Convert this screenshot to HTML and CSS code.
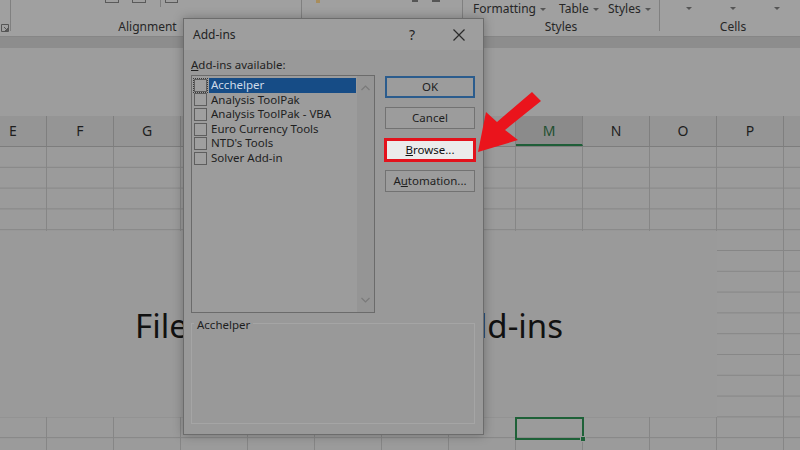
FILE: index.html
```html
<!DOCTYPE html>
<html>
<head>
<meta charset="utf-8">
<link rel="stylesheet" href="styles.css">
</head>
<body>
<div class="app">
  <div class="ribbon">
    <div class="grp g1">
      <div class="gtop"></div>
      <div class="glabel"><svg class="launch" width="8" height="8" viewBox="0 0 8 8"><path d="M0.5 7.5V0.5h7v7z" fill="none" stroke="#555" stroke-width="1"/><path d="M3 3l3.5 3.5M6.5 4v2.5H4" fill="none" stroke="#555" stroke-width="1"/></svg></div>
    </div>
    <div class="grp g2">
      <div class="gtop">
        <span class="ico ico-a"></span><span class="ico ico-b"></span><span class="vsep"></span><span class="ico ico-c"></span>
      </div>
      <div class="glabel">Alignment</div>
    </div>
    <div class="grp g3">
      <div class="gtop"><span class="ico-or"></span><span class="mark m1"></span><span class="mark m2"></span></div>
      <div class="glabel">Number</div>
    </div>
    <div class="grp g4">
      <div class="gtop">
        <span class="ti ti1">Formatting<i class="caret"></i></span>
        <span class="ti ti2">Table<i class="caret"></i></span>
        <span class="ti ti3">Styles<i class="caret"></i></span>
      </div>
      <div class="glabel">Styles</div>
    </div>
    <div class="grp g5">
      <div class="gtop"><i class="caret c1"></i><i class="caret c2"></i><i class="caret c3"></i></div>
      <div class="glabel">Cells</div>
    </div>
  </div>
  <div class="band"></div>
  <div class="fbar"></div>
  <div class="colhead">
    <div class="ch">E</div><div class="ch">F</div><div class="ch">G</div><div class="ch">H</div><div class="ch">I</div><div class="ch">J</div><div class="ch">K</div><div class="ch">L</div><div class="ch sel">M</div><div class="ch">N</div><div class="ch">O</div><div class="ch">P</div><div class="ch"></div>
  </div>
  <div class="grid"></div>

  <div class="shape">
    <div class="bigtext"><span>File</span><span>&gt; Options &gt;</span><span>Add-ins</span></div>
  </div>
  <div class="selcell"><span class="handle"></span></div>

  <div class="dlg">
    <div class="dlg-title">
      <span class="dlg-name">Add-ins</span>
      <span class="help">?</span>
      <span class="close"><svg width="12" height="12" viewBox="0 0 12 12"><path d="M0.5 0.5L11.5 11.5M11.5 0.5L0.5 11.5" stroke="#2a2a2a" stroke-width="1.2"/></svg></span>
    </div>
    <div class="dlg-body">
      <div class="leftcol">
        <div class="lab"><u>A</u>dd-ins available:</div>
        <div class="listbox">
          <div class="items">
            <div class="item"><span class="cb focus"></span><span class="lbl selected">Acchelper</span></div>
            <div class="item"><span class="cb"></span><span class="lbl">Analysis ToolPak</span></div>
            <div class="item"><span class="cb"></span><span class="lbl">Analysis ToolPak - VBA</span></div>
            <div class="item"><span class="cb"></span><span class="lbl">Euro Currency Tools</span></div>
            <div class="item"><span class="cb"></span><span class="lbl">NTD's Tools</span></div>
            <div class="item"><span class="cb"></span><span class="lbl">Solver Add-in</span></div>
          </div>
          <div class="scroll">
            <svg width="9" height="6" viewBox="0 0 9 6"><path d="M0.5 5L4.5 1L8.5 5" fill="none" stroke="#7a7a7a" stroke-width="1.2"/></svg>
            <svg width="9" height="6" viewBox="0 0 9 6"><path d="M0.5 1L4.5 5L8.5 1" fill="none" stroke="#7a7a7a" stroke-width="1.2"/></svg>
          </div>
        </div>
      </div>
      <div class="btncol">
        <div class="btn def">OK</div>
        <div class="btn">Cancel</div>
        <div class="btn browse"><span><u>B</u>rowse...</span></div>
        <div class="btn">A<u>u</u>tomation...</div>
      </div>
      <div class="desc">
        <span class="legend">Acchelper</span>
      </div>
    </div>
  </div>

  <svg class="arrow" width="80" height="72" viewBox="470 86 80 72">
    <polygon points="532,92 541,101 505,130 518,140 478,152 486,112 497,122" fill="#ea141c"/>
  </svg>
</div>
</body>
</html>
```
FILE: styles.css
```css
* { box-sizing: border-box; }
html, body { margin: 0; padding: 0; }
body {
  width: 800px;
  height: 450px;
  overflow: hidden;
  font-family: "Noto Sans", "Open Sans", sans-serif;
  color: #222;
  background: #9b9b9b;
}
.app {
  position: relative;
  width: 800px;
  height: 450px;
  display: flex;
  flex-direction: column;
  overflow: hidden;
}

/* ribbon */
.ribbon {
  height: 36px;
  background: #a0a0a0;
  display: flex;
  flex: none;
}
.grp {
  height: 31px;
  border-right: 1px solid #808080;
  display: flex;
  flex-direction: column;
  font-size: 12px;
}
.gtop {
  height: 20px;
  flex: none;
  display: flex;
  align-items: flex-start;
  line-height: 14px;
  color: #262626;
}
.glabel {
  height: 11px;
  flex: none;
  line-height: 14px;
  text-align: center;
  color: #262626;
  white-space: nowrap;
}
.g1 { width: 11px; }
.g1 .glabel { text-align: left; padding-top: 4px; padding-left: 1px; line-height: 8px; }
.launch { display: block; }
.g2 { width: 291px; padding-right: 17px; }
.g3 { width: 161px; }
.g4 { width: 197px; }
.g4 .gtop { padding-top: 1px; }
.g5 { flex: 1; border-right: none; padding-left: 6px; }

.ico { display: inline-block; width: 14px; height: 3px; border: 1px solid #5a5a5a; border-top: none; }
.ico-a { margin-left: 94px; }
.ico-b { margin-left: 13px; }
.vsep { display: inline-block; width: 1px; height: 7px; background: #7e7e7e; margin-left: 14px; }
.ico-c { margin-left: 4px; width: 13px; }
.ico-or { display: inline-block; width: 4px; height: 3px; background: #a88d5c; margin-left: 14px; }
.mark { display: inline-block; height: 2px; background: #555; }
.m1 { width: 6px; margin-left: 92px; }
.m2 { width: 8px; margin-left: 14px; }

.ti { display: inline-flex; align-items: center; white-space: nowrap; line-height: 15px; }
.ti1 { margin-left: 10px; width: 86px; }
.ti2 { width: 49px; }
.caret {
  display: inline-block;
  width: 0; height: 0;
  border-left: 3px solid transparent;
  border-right: 3px solid transparent;
  border-top: 3px solid #555;
  margin-left: 4px;
  margin-top: 1px;
}
.g5 .gtop { padding-top: 7px; }
.g5 .caret { margin: 0; }
.c1 { margin-left: 20px !important; }
.c2 { margin-left: 38px !important; }
.c3 { margin-left: 38px !important; }

.band { height: 12px; background: #8d8d8d; flex: none; border-top: 1px solid #868686; }
.fbar { height: 68px; background: #9d9d9d; flex: none; }

/* column headers */
.colhead {
  height: 31px;
  flex: none;
  display: flex;
  margin-left: -20px;
  background: #959595;
  border-bottom: 1px solid #7d7d7d;
}
.ch {
  width: 67px;
  flex: none;
  border-right: 1px solid #7f7f7f;
  text-align: center;
  font-size: 14px;
  line-height: 30px;
  color: #1e1e1e;
}
.ch.sel {
  background: #8b8b8b;
  color: #1f4f30;
  border-bottom: 2px solid #1f5e38;
}

.grid {
  flex: 1;
  background-color: #9b9b9b;
  background-image:
    linear-gradient(to right, #868686 0 1px, transparent 1px),
    linear-gradient(to bottom, transparent 0 19.8px, #868686 19.8px 20.8px);
  background-size: 67px 100%, 100% 20.8px;
  background-position: 46px 0, 0 0;
}

/* text box shape over the sheet */
.shape {
  position: absolute;
  left: 0;
  top: 231px;
  width: 717px;
  height: 186px;
  background: #9a9a9a;
  padding-top: 75px;
  padding-left: 135px;
}
.bigtext {
  width: 428px;
  display: flex;
  justify-content: space-between;
  font-size: 33px;
  line-height: 40px;
  color: #111;
  white-space: nowrap;
}

.selcell {
  position: absolute;
  left: 515px;
  top: 417px;
  width: 69px;
  height: 23px;
  border: 2px solid #1e6138;
}
.handle {
  position: absolute;
  right: -4px;
  bottom: -4px;
  width: 6px;
  height: 6px;
  background: #1e6138;
  border: 1px solid #9b9b9b;
}

/* dialog */
.dlg {
  position: absolute;
  left: 183px;
  top: 18px;
  width: 301px;
  height: 417px;
  border: 1px solid #6c6c6c;
  background: #999999;
  box-shadow: 0 0 10px rgba(0,0,0,0.28);
  display: flex;
  flex-direction: column;
}
.dlg-title {
  height: 31px;
  flex: none;
  display: flex;
  align-items: center;
  padding-left: 9px;
  background: #9e9e9e;
  font-size: 12px;
  color: #242424;
}
.help {
  margin-left: auto;
  width: 46px;
  text-align: center;
  font-size: 14px;
}
.close {
  width: 48px;
  display: flex;
  justify-content: center;
}
.close svg { display: block; }

.dlg-body {
  display: grid;
  grid-template-columns: 184px 90px;
  column-gap: 10px;
  padding: 7px 8px 0 7px;
  font-size: 11.5px;
}
.lab { line-height: 16px; height: 18px; color: #1f1f1f; }
.listbox {
  height: 238px;
  border: 1px solid #6b6b6b;
  background: #9c9c9c;
  display: flex;
}
.items { flex: 1; padding: 2px 1px 0 2px; }
.item { display: flex; align-items: center; height: 14.6px; }
.cb {
  width: 13px;
  height: 13px;
  flex: none;
  border: 1px solid #5e5e5e;
  background: #9f9f9f;
  margin-right: 2px;
}
.cb.focus { outline: 1px dotted #3a3a3a; outline-offset: 0; }
.lbl {
  flex: 1;
  line-height: 14.5px;
  padding-left: 2px;
  white-space: nowrap;
  color: #1e1e1e;
}
.lbl.selected { background: #164c86; color: #cfdbe9; }
.scroll {
  width: 17px;
  flex: none;
  background: #959595;
  display: flex;
  flex-direction: column;
  align-items: center;
  justify-content: space-between;
  padding: 9px 0 9px;
}
.scroll svg { display: block; }

.btncol {
  padding-top: 19px;
  display: flex;
  flex-direction: column;
  gap: 9.3px;
}
.btn {
  height: 22px;
  border: 1px solid #727272;
  background: #9c9c9c;
  text-align: center;
  line-height: 20px;
  color: #1e1e1e;
}
.btn.def { border: 2px solid #2b5c8d; line-height: 18px; }
.btn.browse {
  background: #ebebeb;
  color: #111;
  outline: 3px solid #e3121c;
  outline-offset: -2px;
}

.desc {
  grid-column: 1 / span 2;
  margin-top: 10px;
  height: 101px;
  border: 1px solid #a5a5a5;
  padding: 0 2px;
}
.legend {
  display: inline-block;
  margin-top: -6px;
  padding: 0 3px;
  line-height: 14px;
  background: #999999;
  color: #1e1e1e;
  vertical-align: top;
}

.arrow {
  position: absolute;
  left: 470px;
  top: 86px;
}
```
